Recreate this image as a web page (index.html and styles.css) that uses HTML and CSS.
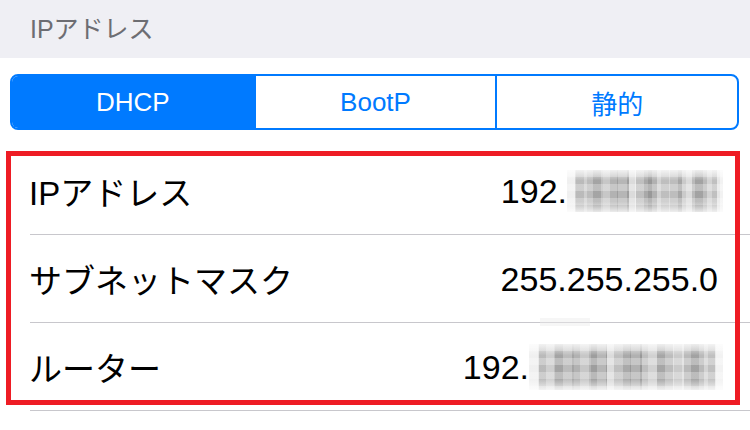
FILE: index.html
```html
<!DOCTYPE html>
<html lang="ja">
<head>
<meta charset="utf-8">
<link rel="stylesheet" href="styles.css">
</head>
<body>
<div class="page">
  <div class="header">IPアドレス</div>
  <div class="seg-wrap">
    <div class="seg">
      <div class="seg-item active">DHCP</div>
      <div class="seg-item">BootP</div>
      <div class="seg-item">静的</div>
    </div>
  </div>
  <div class="table">
    <div class="row">
      <span class="label">IPアドレス</span>
      <span class="value">192.<span class="blur blur-a"></span></span>
    </div>
    <div class="row">
      <span class="label">サブネットマスク</span>
      <span class="value">255.255.255.0</span>
    </div>
    <div class="row">
      <span class="label">ルーター</span>
      <span class="value">192.<span class="blur blur-b"></span></span>
    </div>
  </div>
  <div class="smudge"></div>
  <div class="highlight"></div>
</div>
</body>
</html>
```

FILE: styles.css
```css
* { box-sizing: border-box; }
html, body { margin: 0; padding: 0; background: #fff; }
body {
  width: 750px;
  height: 430px;
  overflow: hidden;
  font-family: "Liberation Sans", "Noto Sans CJK JP", sans-serif;
}
.page { position: relative; width: 750px; height: 430px; }

.header {
  height: 58px;
  background: #efeff4;
  color: #6d6d72;
  font-size: 25px;
  line-height: 58px;
  padding-left: 30px;
}

.seg-wrap { padding: 16px 11px 0 10px; }
.seg {
  height: 56px;
  border: 2px solid #007aff;
  border-radius: 8px;
  display: grid;
  grid-template-columns: 1fr 1fr 1fr;
  overflow: hidden;
}
.seg-item {
  display: flex;
  align-items: center;
  justify-content: center;
  color: #007aff;
  font-size: 26px;
}
.seg-item + .seg-item { border-left: 2px solid #007aff; }
.seg-item.active { background: #007aff; color: #fff; }

.table { margin-top: 17px; }
.row {
  height: 88px;
  display: flex;
  align-items: center;
  justify-content: space-between;
  padding: 0 32px 0 29px;
  position: relative;
}
.row::after {
  content: "";
  position: absolute;
  left: 30px;
  right: 0;
  bottom: 0;
  height: 1px;
  background: #c8c7cc;
}
.label { font-size: 33px; color: #000; }
.value {
  font-size: 34px;
  color: #000;
  display: flex;
  align-items: center;
}
.blur {
  display: inline-block;
  height: 42px;
  margin-right: -5px;
  background-image:
    linear-gradient(to bottom, rgba(255,255,255,.75), rgba(255,255,255,0) 25%, rgba(255,255,255,0) 75%, rgba(255,255,255,.75)),
    repeating-linear-gradient(to bottom, rgba(255,255,255,.28) 0 7px, rgba(255,255,255,0) 7px 14px),
    repeating-linear-gradient(to right, rgba(255,255,255,.2) 0 9px, rgba(0,0,0,.04) 9px 17px),
    linear-gradient(to right, #ececec 0 5%, #c2c2c2 5% 13%, #ababab 13% 23%, #b9b9b9 23% 32%, #a4a4a4 32% 40%, #e4e4e4 40% 44%, #b0b0b0 44% 52%, #9e9e9e 52% 58%, #c6c6c6 58% 66%, #adadad 66% 74%, #d2d2d2 74% 80%, #a9a9a9 80% 90%, #c8c8c8 90% 96%, #efefef 96%);
}
.blur-a { width: 156px; }
.blur-b { width: 194px; height: 46px; }

.smudge {
  position: absolute;
  left: 540px;
  top: 318px;
  width: 50px;
  height: 8px;
  background: rgba(235,235,235,.45);
}

.highlight {
  position: absolute;
  left: 6px;
  top: 151px;
  width: 734px;
  height: 254px;
  border: 5px solid #ee1c24;
}
```
